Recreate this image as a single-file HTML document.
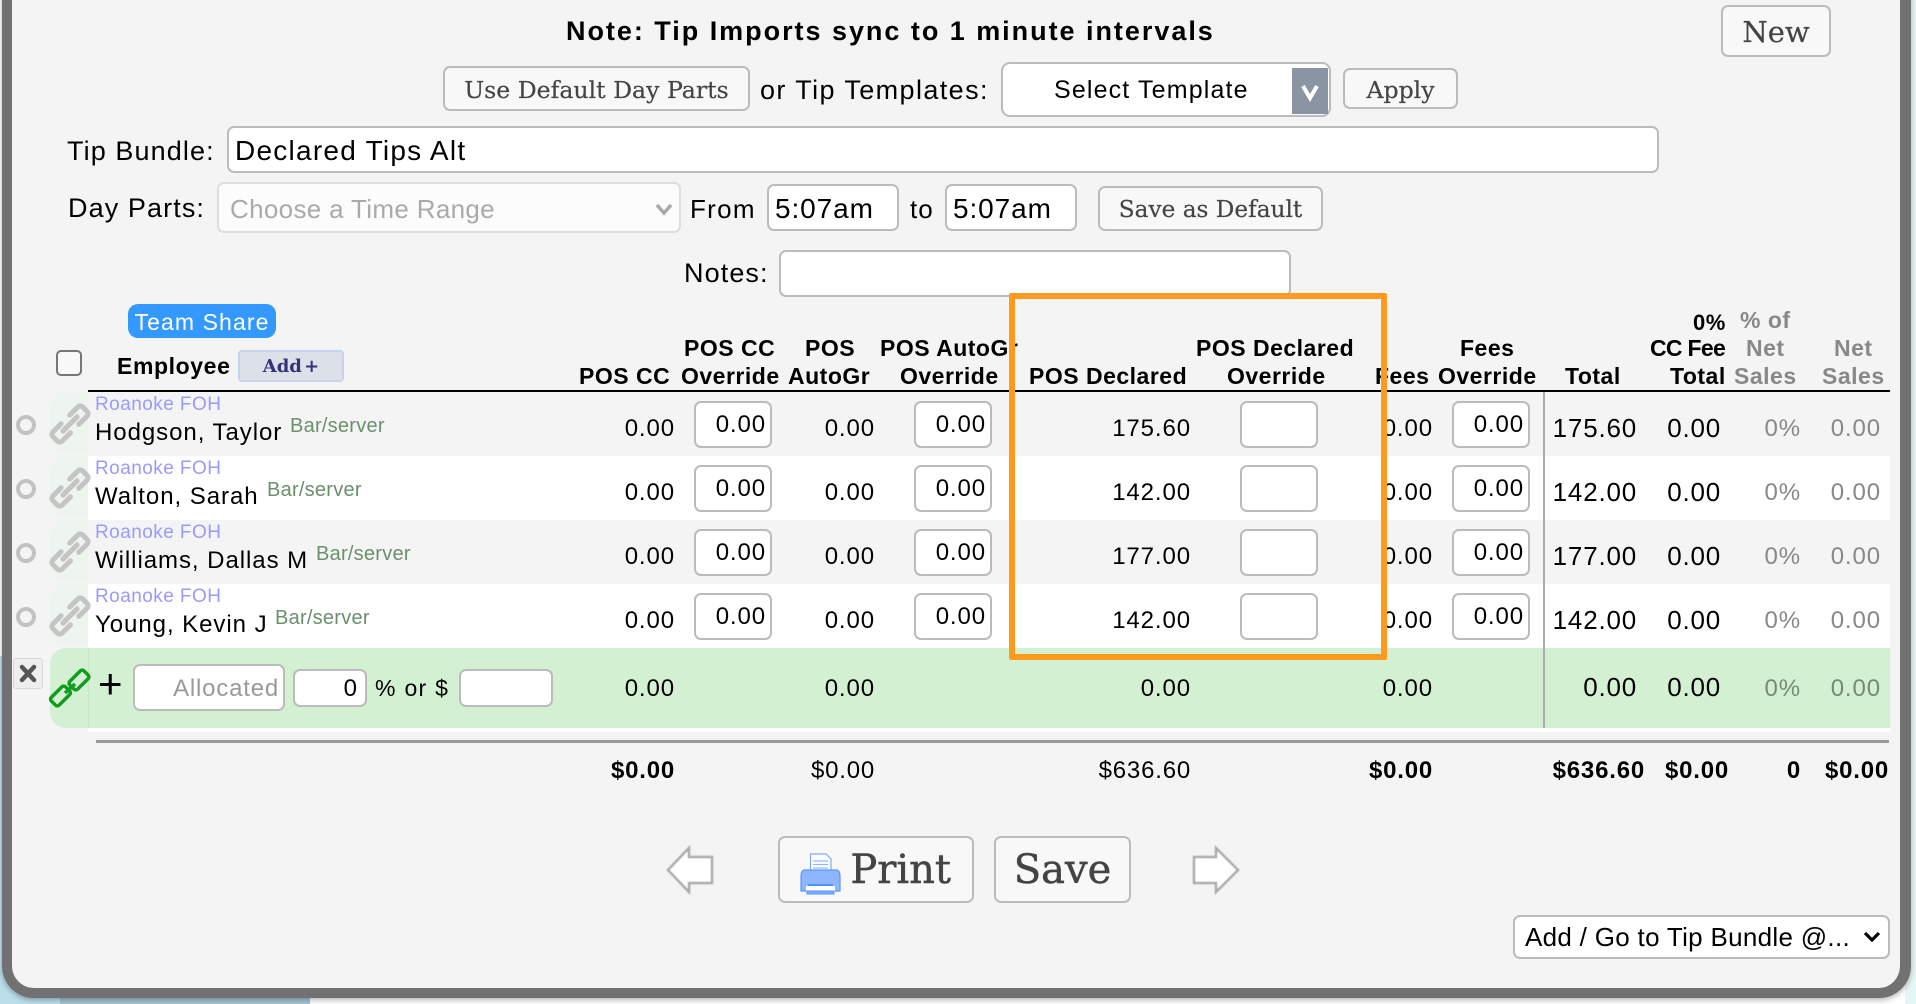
<!DOCTYPE html>
<html lang="en">
<head>
<meta charset="utf-8">
<title>Tip Bundle</title>
<style>
html,body{margin:0;padding:0;width:1916px;height:1004px;overflow:hidden;background:#fff}
body{position:relative;font-family:"Liberation Sans",Arial,sans-serif;color:#000}
#bgl{position:absolute;left:0;top:656px;width:300px;height:348px;background:#bcdeeb}
#bgb{position:absolute;left:60px;top:998px;width:250px;height:6px;background:#a5c5d1}
#bgr{position:absolute;left:1905px;top:0;width:11px;height:1004px;background:#e6f5f5}
#frame{position:absolute;left:2px;top:-60px;width:1909px;height:1058px;box-sizing:border-box;background:#f4f4f4;border:solid #717171;border-width:10px 11px 10px 10px;border-radius:32px;box-shadow:0 2px 6px rgba(0,0,0,.3)}
.t{position:absolute;white-space:nowrap;line-height:30px;height:30px}
.b{font-weight:bold;font-size:23px;letter-spacing:.5px}
.g{color:#888}
.btn{position:absolute;box-sizing:border-box;margin:0;padding:2px 0 0;background:#f8f8f8;border:2.5px solid #bbb;border-radius:7px;color:#444;font-family:"DejaVu Serif",serif;font-size:23.6px;text-align:center;white-space:nowrap;-webkit-text-stroke:.2px #444}
.big{font-size:40px;-webkit-text-stroke:.5px #444}
.inp{position:absolute;box-sizing:border-box;margin:0;background:#fff;border:2.5px solid #bbb;border-radius:7px;color:#000;font-family:"Liberation Sans",sans-serif;outline:0;display:block}
.row{position:absolute;left:0;width:1916px;height:64px}
.bg{position:absolute;left:88px;top:0;width:1802px;height:64px}
.lc{position:absolute;left:50px;top:0;width:38px;height:62px;background:#eef4ee;border-radius:16px 0 0 16px}
.rd{position:absolute;left:16px;top:23px;width:20px;height:20px;box-sizing:border-box;border:4.5px solid #c2c2c2;border-radius:50%}
.ch{position:absolute;left:50px;top:11px}
.s{left:95px;top:-2px;font-size:19px;letter-spacing:.45px;color:#9999ff}
.n{left:95px;top:26px;font-size:24px;letter-spacing:.95px}
.p{top:19px;font-size:20px;color:#6c8f6c;letter-spacing:.25px}
.v{font-size:24px;letter-spacing:.9px;text-align:right;top:22px}
.tt{font-size:26px;letter-spacing:.8px;top:21px}
.vi{width:78px;height:47px;top:8.5px;text-align:right;font-size:24px;letter-spacing:.9px;padding:2px 4px 0 0}
.vb{position:absolute;left:1543px;top:392px;width:2px;height:336px;background:#aaa}
.f{top:756px;font-size:24px;letter-spacing:.8px;text-align:right}
.fb{font-weight:bold}
#orange{position:absolute;left:1009px;top:293px;width:378px;height:367px;box-sizing:border-box;border:6px solid #ff9a1f;border-radius:2px}
svg{position:absolute;overflow:visible}
</style>
</head>
<body>
<div id="bgl"></div><div id="bgb"></div><div id="bgr"></div>
<div id="frame"></div>

<div class="t" style="left:566px;top:16px;font-size:27px;font-weight:bold;letter-spacing:1.97px">Note: Tip Imports sync to 1 minute intervals</div>
<button class="btn" style="left:1721px;top:5px;width:110px;height:52px;font-size:29px">New</button>

<button class="btn" style="left:443px;top:66px;width:307px;height:45px">Use Default Day Parts</button>
<div class="t" style="left:760px;top:75px;font-size:27px;letter-spacing:1.4px">or Tip Templates:</div>
<div class="inp" style="left:1001px;top:62px;width:330px;height:55px;border-radius:9px"></div>
<div class="t" style="left:1054px;top:75px;font-size:25px;letter-spacing:1.15px">Select Template</div>
<div style="position:absolute;left:1292px;top:68px;width:36px;height:46px;background:#8a94a3"></div>
<svg style="left:1292px;top:68px" width="36" height="46"><path d="M11 18 L18 30 L25 18" fill="none" stroke="#fff" stroke-width="4"/></svg>
<button class="btn" style="left:1343px;top:68px;width:115px;height:41px">Apply</button>

<div class="t" style="left:67px;top:136px;font-size:27px;letter-spacing:1.1px">Tip Bundle:</div>
<input class="inp" style="left:227px;top:126px;width:1432px;height:47px;font-size:28px;letter-spacing:1.25px;padding:2px 0 0 6px" value="Declared Tips Alt">

<div class="t" style="left:68px;top:193px;font-size:27px;letter-spacing:1.1px">Day Parts:</div>
<div class="inp" style="left:217px;top:182px;width:464px;height:51px;background:#fcfcfc;border-color:#ddd"></div>
<div class="t" style="left:230px;top:194px;font-size:26px;letter-spacing:.33px;color:#aaa">Choose a Time Range</div>
<svg style="left:655px;top:202px" width="18" height="14"><path d="M2 3 L9 11 L16 3" fill="none" stroke="#a9a9a9" stroke-width="3.5"/></svg>
<div class="t" style="left:690px;top:194px;font-size:26px;letter-spacing:1.3px">From</div>
<input class="inp" style="left:767px;top:184px;width:132px;height:47px;font-size:28px;letter-spacing:.9px;padding:2px 0 0 6px" value="5:07am">
<div class="t" style="left:910px;top:194px;font-size:26px;letter-spacing:1px">to</div>
<input class="inp" style="left:945px;top:184px;width:132px;height:47px;font-size:28px;letter-spacing:.9px;padding:2px 0 0 6px" value="5:07am">
<button class="btn" style="left:1098px;top:186px;width:225px;height:45px;font-size:23.2px">Save as Default</button>

<div class="t" style="left:684px;top:258px;font-size:27px;letter-spacing:1.1px">Notes:</div>
<input class="inp" style="left:779px;top:250px;width:512px;height:47px" value="">

<div style="position:absolute;left:128px;top:304px;width:148px;height:34px;background:#3399ff;border-radius:10px;color:#fff;text-align:center;font-size:23px;letter-spacing:1.1px;line-height:36px">Team Share</div>
<div style="position:absolute;left:56px;top:350px;width:26px;height:26px;box-sizing:border-box;background:#f8f8f8;border:2px solid #767676;border-radius:5px"></div>
<div class="t b" style="left:117px;top:351px;letter-spacing:.6px">Employee</div>
<button class="btn" style="left:238px;top:350px;width:106px;height:32px;background:#dce1e9;border:2px solid #c7d2ec;border-radius:4px;color:#333377;font-weight:bold;font-size:18px;line-height:26px;word-spacing:-4px;-webkit-text-stroke:0">Add +</button>

<div class="t b" style="left:579px;top:361px">POS CC</div>
<div class="t b" style="left:684px;top:333px">POS CC</div>
<div class="t b" style="left:681px;top:361px">Override</div>
<div class="t b" style="left:805px;top:333px">POS</div>
<div class="t b" style="left:788px;top:361px">AutoGr</div>
<div class="t b" style="left:880px;top:333px">POS AutoGr</div>
<div class="t b" style="left:900px;top:361px">Override</div>
<div class="t b" style="left:1029px;top:361px">POS Declared</div>
<div class="t b" style="left:1196px;top:333px">POS Declared</div>
<div class="t b" style="left:1227px;top:361px">Override</div>
<div class="t b" style="left:1375px;top:361px">Fees</div>
<div class="t b" style="left:1460px;top:333px">Fees</div>
<div class="t b" style="left:1438px;top:361px">Override</div>
<div class="t b" style="left:1565px;top:361px">Total</div>
<div class="t b" style="left:1693px;top:308px;font-size:22px">0%</div>
<div class="t b" style="left:1650px;top:333px;letter-spacing:-.7px">CC Fee</div>
<div class="t b" style="left:1670px;top:361px">Total</div>
<div class="t b g" style="left:1740px;top:305px">% of</div>
<div class="t b g" style="left:1746px;top:333px">Net</div>
<div class="t b g" style="left:1734px;top:361px">Sales</div>
<div class="t b g" style="left:1834px;top:333px">Net</div>
<div class="t b g" style="left:1822px;top:361px">Sales</div>

<div style="position:absolute;left:88px;top:390px;width:1802px;height:2px;background:#000"></div>

<div class="row" style="top:392px"><div class="bg" style="background:#f4f4f4"></div><div class="lc"></div><div class="rd"></div>
<svg class="ch" width="40" height="42" viewBox="0 0 40 42"><g transform="translate(20 21) rotate(-45)" fill="none" stroke="#c4c4c4" stroke-width="5" stroke-linecap="round" stroke-linejoin="round"><path d="M-6 -6.5 H-17 Q-21 -6.5 -21 -3 V3 Q-21 6.5 -17 6.5 H-6"/><path d="M6 -6.5 H17 Q21 -6.5 21 -3 V3 Q21 6.5 17 6.5 H6"/><path d="M-10 0 H10"/></g></svg>
<div class="t s">Roanoke FOH</div><div class="t n">Hodgson, Taylor</div><div class="t p" style="left:290px">Bar/server</div>
<div class="t v" style="right:1241px">0.00</div><input class="inp vi" style="left:694px" value="0.00">
<div class="t v" style="right:1041px">0.00</div><input class="inp vi" style="left:914px" value="0.00">
<div class="t v" style="right:725px">175.60</div><input class="inp vi" style="left:1240px" value="">
<div class="t v" style="right:483px">0.00</div><input class="inp vi" style="left:1452px" value="0.00">
<div class="t v tt" style="right:279px">175.60</div><div class="t v tt" style="right:195px">0.00</div>
<div class="t v g" style="right:115px">0%</div><div class="t v g" style="right:35px">0.00</div></div>

<div class="row" style="top:456px"><div class="bg" style="background:#fff"></div><div class="lc"></div><div class="rd"></div>
<svg class="ch" width="40" height="42" viewBox="0 0 40 42"><g transform="translate(20 21) rotate(-45)" fill="none" stroke="#c4c4c4" stroke-width="5" stroke-linecap="round" stroke-linejoin="round"><path d="M-6 -6.5 H-17 Q-21 -6.5 -21 -3 V3 Q-21 6.5 -17 6.5 H-6"/><path d="M6 -6.5 H17 Q21 -6.5 21 -3 V3 Q21 6.5 17 6.5 H6"/><path d="M-10 0 H10"/></g></svg>
<div class="t s">Roanoke FOH</div><div class="t n">Walton, Sarah</div><div class="t p" style="left:267px">Bar/server</div>
<div class="t v" style="right:1241px">0.00</div><input class="inp vi" style="left:694px" value="0.00">
<div class="t v" style="right:1041px">0.00</div><input class="inp vi" style="left:914px" value="0.00">
<div class="t v" style="right:725px">142.00</div><input class="inp vi" style="left:1240px" value="">
<div class="t v" style="right:483px">0.00</div><input class="inp vi" style="left:1452px" value="0.00">
<div class="t v tt" style="right:279px">142.00</div><div class="t v tt" style="right:195px">0.00</div>
<div class="t v g" style="right:115px">0%</div><div class="t v g" style="right:35px">0.00</div></div>

<div class="row" style="top:520px"><div class="bg" style="background:#f4f4f4"></div><div class="lc"></div><div class="rd"></div>
<svg class="ch" width="40" height="42" viewBox="0 0 40 42"><g transform="translate(20 21) rotate(-45)" fill="none" stroke="#c4c4c4" stroke-width="5" stroke-linecap="round" stroke-linejoin="round"><path d="M-6 -6.5 H-17 Q-21 -6.5 -21 -3 V3 Q-21 6.5 -17 6.5 H-6"/><path d="M6 -6.5 H17 Q21 -6.5 21 -3 V3 Q21 6.5 17 6.5 H6"/><path d="M-10 0 H10"/></g></svg>
<div class="t s">Roanoke FOH</div><div class="t n">Williams, Dallas M</div><div class="t p" style="left:316px">Bar/server</div>
<div class="t v" style="right:1241px">0.00</div><input class="inp vi" style="left:694px" value="0.00">
<div class="t v" style="right:1041px">0.00</div><input class="inp vi" style="left:914px" value="0.00">
<div class="t v" style="right:725px">177.00</div><input class="inp vi" style="left:1240px" value="">
<div class="t v" style="right:483px">0.00</div><input class="inp vi" style="left:1452px" value="0.00">
<div class="t v tt" style="right:279px">177.00</div><div class="t v tt" style="right:195px">0.00</div>
<div class="t v g" style="right:115px">0%</div><div class="t v g" style="right:35px">0.00</div></div>

<div class="row" style="top:584px"><div class="bg" style="background:#fff"></div><div class="lc"></div><div class="rd"></div>
<svg class="ch" width="40" height="42" viewBox="0 0 40 42"><g transform="translate(20 21) rotate(-45)" fill="none" stroke="#c4c4c4" stroke-width="5" stroke-linecap="round" stroke-linejoin="round"><path d="M-6 -6.5 H-17 Q-21 -6.5 -21 -3 V3 Q-21 6.5 -17 6.5 H-6"/><path d="M6 -6.5 H17 Q21 -6.5 21 -3 V3 Q21 6.5 17 6.5 H6"/><path d="M-10 0 H10"/></g></svg>
<div class="t s">Roanoke FOH</div><div class="t n">Young, Kevin J</div><div class="t p" style="left:275px">Bar/server</div>
<div class="t v" style="right:1241px">0.00</div><input class="inp vi" style="left:694px" value="0.00">
<div class="t v" style="right:1041px">0.00</div><input class="inp vi" style="left:914px" value="0.00">
<div class="t v" style="right:725px">142.00</div><input class="inp vi" style="left:1240px" value="">
<div class="t v" style="right:483px">0.00</div><input class="inp vi" style="left:1452px" value="0.00">
<div class="t v tt" style="right:279px">142.00</div><div class="t v tt" style="right:195px">0.00</div>
<div class="t v g" style="right:115px">0%</div><div class="t v g" style="right:35px">0.00</div></div>

<div style="position:absolute;left:88px;top:728px;width:1802px;height:4px;background:#fff"></div>
<div style="position:absolute;left:50px;top:648px;width:1840px;height:80px;background:#d4f0d2;border-radius:16px 0 0 16px"></div>
<div style="position:absolute;left:88px;top:648px;width:1px;height:80px;background:#c2eabf"></div>

<div style="position:absolute;left:13px;top:658px;width:30px;height:31px;box-sizing:border-box;background:#eeeeee;border:1.5px solid #d8d8d8;border-radius:3px"></div>
<svg style="left:13px;top:658px" width="30" height="31"><path d="M9 9 L21 22 M21 9 L9 22" stroke="#555" stroke-width="4.5" stroke-linecap="round"/></svg>
<svg style="left:50px;top:667px" width="40" height="42" viewBox="0 0 40 42"><g fill="none" stroke="#109c1c" stroke-width="3.5"><rect x="-10" y="-5.5" width="20" height="11" rx="2.5" transform="translate(10.5 29) rotate(-45)"/><rect x="-10" y="-5.5" width="20" height="11" rx="2.5" transform="translate(29 13) rotate(-45)"/><path d="M15 26 L25 17"/></g></svg>
<div class="t" style="left:98px;top:669px;font-size:42px">+</div>
<input class="inp" style="left:133px;top:664px;width:152px;height:47px;font-size:24px;letter-spacing:.8px;text-align:right;padding:2px 4px 0 0;color:#999" value="Allocated">
<input class="inp" style="left:293px;top:669px;width:74px;height:38px;font-size:24px;text-align:right;padding:1px 8px 0 0" value="0">
<div class="t" style="left:375px;top:673px;font-size:23px;letter-spacing:1.3px">% or $</div>
<input class="inp" style="left:459px;top:669px;width:94px;height:38px" value="">
<div class="t v" style="right:1241px;top:674px">0.00</div>
<div class="t v" style="right:1041px;top:674px">0.00</div>
<div class="t v" style="right:725px;top:674px">0.00</div>
<div class="t v" style="right:483px;top:674px">0.00</div>
<div class="t v tt" style="right:279px;top:672px">0.00</div>
<div class="t v tt" style="right:195px;top:672px">0.00</div>
<div class="t v" style="right:115px;top:674px;color:#758a75">0%</div>
<div class="t v" style="right:35px;top:674px;color:#758a75">0.00</div>
<div class="vb"></div>

<div style="position:absolute;left:96px;top:740px;width:1793px;height:3px;background:#999"></div>
<div class="t f fb" style="right:1241px">$0.00</div>
<div class="t f" style="right:1041px">$0.00</div>
<div class="t f" style="right:725px">$636.60</div>
<div class="t f fb" style="right:483px">$0.00</div>
<div class="t f fb" style="right:271px">$636.60</div>
<div class="t f fb" style="right:187px">$0.00</div>
<div class="t f fb" style="right:115px">0</div>
<div class="t f fb" style="right:27px">$0.00</div>

<svg style="left:0;top:0" width="1916" height="1004"><defs><filter id="sf" x="-20%" y="-20%" width="140%" height="140%"><feGaussianBlur stdDeviation=".6"/></filter></defs>
<polygon points="668,870 689,848 689,857 712,857 712,883 689,883 689,892" fill="#fff" stroke="#aaa" stroke-width="2.5" filter="url(#sf)"/>
<polygon points="1238,870 1216,848 1216,857 1194,857 1194,883 1216,883 1216,892" fill="#fff" stroke="#aaa" stroke-width="2.5" filter="url(#sf)"/></svg>

<button class="btn big" style="left:778px;top:836px;width:196px;height:67px;text-align:right;padding:1px 21px 0 0">Print</button>
<svg style="left:800px;top:853px" width="41" height="42" viewBox="0 0 41 42"><path d="M10.5 1 H26 L31 6 V20 H10.5 Z" fill="#fff" stroke="#7fa9ff" stroke-width="1.2"/><path d="M13 8 H28 M13 11.5 H28 M13 15 H28" stroke="#8fb6ff" stroke-width="1.2"/><path d="M4 17 H37 Q40 18 40 23 V38 H1 V23 Q1 18 4 17 Z" fill="#8db6ff" stroke="#5a96ff" stroke-width="1.2"/><path d="M6 33 H35 V38 H6 Z" fill="#fff"/><path d="M8 31 H33 V33 H8 Z" fill="#4f8ff8"/><path d="M7 38 H34 V41 H7 Z" fill="#7faaff" stroke="#5a96ff"/></svg>
<button class="btn big" style="left:994px;top:836px;width:137px;height:67px;padding:1px 0 0">Save</button>

<div class="inp" style="left:1513px;top:915px;width:377px;height:44px"></div>
<div class="t" style="left:1525px;top:922px;font-size:26px;letter-spacing:.3px">Add / Go to Tip Bundle @...</div>
<svg style="left:1862px;top:930px" width="20" height="14"><path d="M3 3 L10 10 L17 3" fill="none" stroke="#000" stroke-width="3.2"/></svg>

<div id="orange"></div>
</body>
</html>
